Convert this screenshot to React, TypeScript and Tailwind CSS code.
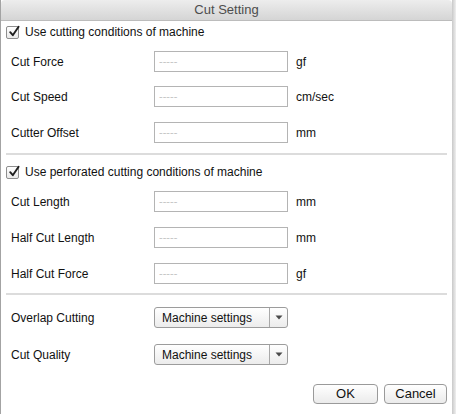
import React from "react";

const font = { fontFamily: '"Liberation Sans", Arial, Helvetica, sans-serif' };

function CheckBox() {
  return (
    <span className="relative inline-flex h-[13px] w-[13px] items-center justify-center rounded-[2px] border border-[#8e8e8e] bg-gradient-to-b from-[#ffffff] to-[#e9e9e9]">
      <svg width="13" height="13" viewBox="0 0 13 13" className="absolute -top-[2px] left-[1px]">
        <path d="M2.2 7.2 L4.8 10.2 L10.6 1.8" fill="none" stroke="#1e1e1e" strokeWidth="1.9" strokeLinecap="round" strokeLinejoin="round" />
      </svg>
    </span>
  );
}

function CheckRow({ label, className }: { label: string; className: string }) {
  return (
    <div className={`flex h-[20px] items-center pl-[5px] ${className}`}>
      <CheckBox />
      <span className="ml-[6px] text-[12px] text-[#111]">{label}</span>
    </div>
  );
}

function FieldRow({ label, unit, className }: { label: string; unit: string; className: string }) {
  return (
    <div className={`flex h-[21px] items-center pl-[10px] ${className}`}>
      <span className="w-[143px] text-[12px] text-[#111]">{label}</span>
      <div className="flex h-[21px] w-[134px] items-center border border-[#b4b4b4] bg-white pl-[4px]">
        <span className="text-[11px] leading-none text-[#c4c4c4]">-----</span>
      </div>
      <span className="ml-[8px] text-[12px] text-[#111]">{unit}</span>
    </div>
  );
}

function SelectRow({ label, className }: { label: string; className: string }) {
  return (
    <div className={`flex h-[21px] items-center pl-[10px] ${className}`}>
      <span className="w-[143px] text-[12px] text-[#111]">{label}</span>
      <div className="flex h-[21px] w-[134px] items-stretch rounded-[3px] border border-[#9c9c9c] bg-gradient-to-b from-[#ffffff] to-[#ececec]">
        <span className="flex flex-1 items-center pl-[7px] text-[12px] text-[#111]">Machine settings</span>
        <span className="flex w-[18px] items-center justify-center border-l border-[#a8a8a8]">
          <svg width="8" height="5" viewBox="0 0 8 5">
            <path d="M0.5 0.5 L7.5 0.5 L4 4.5 Z" fill="#4a4a4a" />
          </svg>
        </span>
      </div>
    </div>
  );
}

function Button({ label, className }: { label: string; className: string }) {
  return (
    <div
      className={`flex h-[20px] items-center justify-center rounded-[4px] border border-[#9a9a9a] bg-gradient-to-b from-[#ffffff] to-[#ebebeb] text-[13px] text-[#111] ${className}`}
    >
      {label}
    </div>
  );
}

export default function App() {
  return (
    <div className="flex h-[414px] w-[456px] bg-white" style={font}>
      <div className="flex h-[414px] w-[452px] flex-col border-l border-[#a3a3a3] bg-white">
        <div className="flex h-[21px] items-center justify-center rounded-tl-[4px] rounded-tr-[4px] border-b border-[#bcbcbc] bg-gradient-to-b from-[#ededed] to-[#d5d5d5] text-[13px] text-[#4d4d4d]">
          Cut Setting
        </div>

        <CheckRow label="Use cutting conditions of machine" className="mt-[1px]" />
        <FieldRow label="Cut Force" unit="gf" className="mt-[9px]" />
        <FieldRow label="Cut Speed" unit="cm/sec" className="mt-[14px]" />
        <FieldRow label="Cutter Offset" unit="mm" className="mt-[15px]" />

        <div className="mx-[5px] mt-[10px] h-[2px] bg-[#dcdcdc]" />

        <CheckRow label="Use perforated cutting conditions of machine" className="mt-[7px]" />
        <FieldRow label="Cut Length" unit="mm" className="mt-[9px]" />
        <FieldRow label="Half Cut Length" unit="mm" className="mt-[15px]" />
        <FieldRow label="Half Cut Force" unit="gf" className="mt-[15px]" />

        <div className="mx-[5px] mt-[9px] h-[2px] bg-[#dcdcdc]" />

        <SelectRow label="Overlap Cutting" className="mt-[12px]" />
        <SelectRow label="Cut Quality" className="mt-[16px]" />

        <div className="mt-[19px] flex justify-end gap-[6px] pr-[5px]">
          <Button label="OK" className="w-[65px]" />
          <Button label="Cancel" className="w-[63px]" />
        </div>
      </div>
      <div className="h-[414px] w-[4px] bg-gradient-to-r from-[#c9c9c9] to-[#efefef]" />
    </div>
  );
}
